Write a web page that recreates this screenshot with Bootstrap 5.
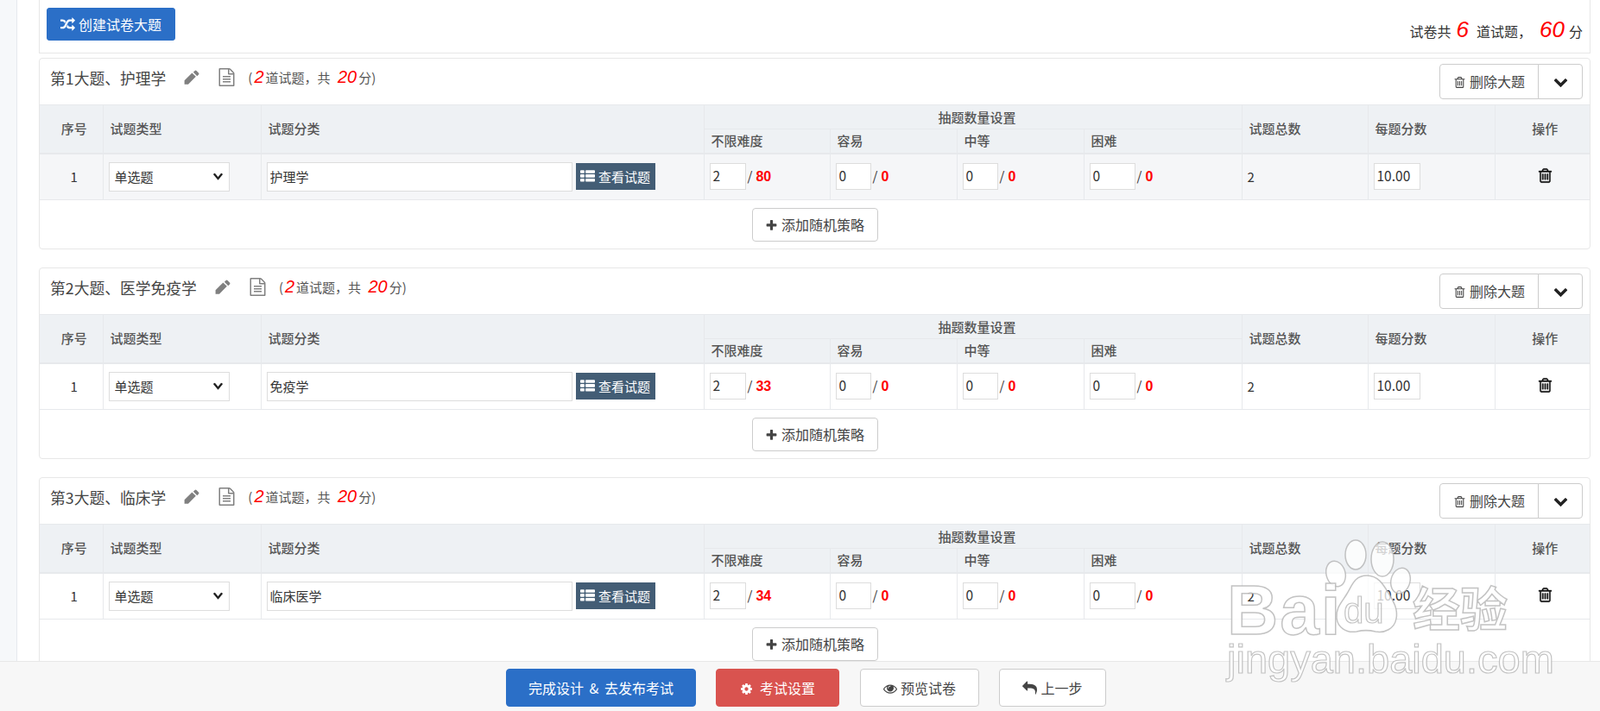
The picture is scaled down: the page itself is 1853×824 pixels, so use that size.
<!DOCTYPE html>
<html lang="zh-CN">
<head>
  <meta charset="UTF-8" />
  <title>试卷设计</title>
  <link href="https://cdn.jsdelivr.net/npm/bootstrap@5.3.0/dist/css/bootstrap.min.css" rel="stylesheet">
  <style>
    html, body { height: 100%; overflow: hidden; }
    body {
      font-family: "Noto Sans CJK SC", "Liberation Sans", sans-serif;
      font-size: 15px;
      color: #333;
      background: #fff;
    }
    svg.ico { fill: currentColor; vertical-align: -2px; }
    .page-wrap { border-left: 1px solid #e6e9ee; margin-left: 19px; height: 824px; padding: 0 11px 0 25px; position: relative; }
    .side-strip { position: fixed; left: 0; top: 0; bottom: 0; width: 19px; background: #f6f8fa; }

    .top-panel { height: 62px; border: 1px solid #e7e7e7; border-top: 0; padding: 9px 8px 0; }
    .btn-create { width: 149px; height: 38px; padding: 0; font-size: 16px; line-height: 36px; background: #2b6fc7; border-color: #2b6fc7; border-radius: 3px; }
    .paper-sum { font-size: 16px; line-height: 30px; margin: 10px 0 0; }
    .paper-sum em { color: #f00; font-size: 26px; font-family: "Liberation Sans", sans-serif; }
    .paper-sum .sum-q { margin: 0 9px 0 6px; }
    .paper-sum .sum-s { margin: 0 5px 0 9px; }

    .sec-panel { border: 1px solid #e7e7e7; border-radius: 4px; height: 222px; margin-bottom: 21px; overflow: hidden; }
    .sec-panel.first-sec { margin-top: 5px; }
    .sec-head { height: 53px; padding: 6px 8px 0 12px; }
    .sec-info { height: 31px; }
    .sec-title { font-size: 17.8px; line-height: 24px; color: #444; }
    .sec-tool { color: #808080; }
    .tool-edit { margin-left: 21px; }
    .tool-doc { margin-left: 20px; }
    .sec-note { font-size: 15px; color: #555; line-height: 24px; margin-left: 14px; word-spacing: 3px; }
    .sec-note em { color: #f00; font-size: 20px; font-family: "Liberation Sans", sans-serif; margin: 0 2px; }
    .del-group .btn { height: 41px; font-size: 16px; color: #444; background: #fff; border-color: #ccc; border-radius: 4px; padding: 0; line-height: 39px; }
    .del-group .btn-del { width: 115px; border-top-right-radius: 0; border-bottom-right-radius: 0; }
    .del-group .btn-fold { width: 52px; border-top-left-radius: 0; border-bottom-left-radius: 0; color: #222; margin-left: -1px; }

    .rule-table { table-layout: fixed; width: 100%; margin: 0; border-collapse: collapse; border-color: #e7e9ec; }
    .rule-table th, .rule-table td { border: 1px solid #e7e9ec; padding: 0 6px; box-shadow: none; }
    .rule-table thead th { padding: 0 8px; background: #eef1f4; color: #555; font-size: 15px; font-weight: 500; line-height: 20px; vertical-align: middle; }
    .rule-table thead tr:first-child th { height: 28px; }
    .rule-table thead tr:last-child th { height: 28px; }
    .rule-table thead { border-bottom: 2px solid #e7e9ec; }
    .rule-table td { height: 54px; vertical-align: middle; background: #fff; font-size: 15px; color: #333; }
    .rule-table tr.row-hover td { background: #f5f6f8; }
    .rule-table thead tr:first-child th:first-child, .rule-table td:first-child { border-left: 0; padding: 0 8px 0 15px; }
    .rule-table thead tr:first-child th:last-child, .rule-table td:last-child { border-right: 0; padding: 0 6px 0 12px; }
    .rule-table .c-center { text-align: center; }
    .rule-table thead th.group-head { padding-left: 18px; }

    .cell-select { width: 140px; height: 34px; font-size: 15px; line-height: 20px; color: #333; padding: 0 6px; border: 1px solid #ddd; border-radius: 0; background-image: url("data:image/svg+xml,%3csvg xmlns='http://www.w3.org/2000/svg' viewBox='0 0 16 16'%3e%3cpath fill='none' stroke='%23222' stroke-linecap='round' stroke-width='3' d='M3 5l5 6 5-6'/%3e%3c/svg%3e"); background-position: right 6px center; background-size: 13px 13px; }
    .cell-input { height: 34px; font-size: 15px; line-height: 20px; color: #333; border: 1px solid #ddd; border-radius: 0; padding: 0 3px; width: 354px; }
    .cell-num { height: 31px; font-size: 15.5px; line-height: 20px; color: #333; border: 1px solid #ddd; border-radius: 0; padding: 0 3px 3px; background: #fff; }
    .w-a { width: 42px; } .w-b { width: 41px; } .w-c { width: 53px; } .w-d { width: 54px; }
    .btn-view { width: 92px; height: 31px; margin-left: 4px; padding: 0; font-size: 15px; line-height: 29px; color: #fff; background: #435d75; border: 0; border-radius: 0; }
    .slash { font-size: 15px; color: #333; margin-left: 2px; }
    .max-num { color: #f00; font-weight: 700; font-size: 16px; margin-left: 4px; font-family: "Liberation Sans", sans-serif; }
    .add-row { height: 56px; padding-top: 9px; }
    .btn-add { width: 146px; height: 39px; padding: 0; font-size: 16px; line-height: 37px; color: #444; background: #fff; border-color: #ccc; border-radius: 4px; }
    .ico-bin { color: #111; stroke: #111; stroke-width: 36px; }

    .foot-bar { position: fixed; left: 0; right: 0; bottom: 0; height: 58px; background: #f7f7f7; border-top: 1px solid #e8e8e8; padding: 8px 0 0 14px; z-index: 5; }
    .foot-bar .btn { height: 44px; font-size: 16px; padding: 0; line-height: 42px; border-radius: 4px; }
    .btn-finish { width: 220px; background: #2b6fc7; border-color: #2b6fc7; word-spacing: 3px; }
    .btn-conf { width: 143px; background: #d9534f; border-color: #d9534f; }
    .foot-bar .btn-prev { width: 138px; margin-left: 1px; }
    .btn-back { width: 124px; }
    .btn-prev, .btn-back { background: #fff; border-color: #ccc; color: #444; }
    .foot-gap { gap: 23px; }

    /* 百度经验 watermark */
    .wm-box { position: fixed; left: 1421px; top: 625px; width: 335px; height: 160px; z-index: 9; pointer-events: none; color: #fff; filter: blur(.4px); }
    .wm-paw { position: absolute; left: 114px; top: 0; }
    .wm-word { position: absolute; font-family: "Liberation Sans", sans-serif; -webkit-text-stroke: 1.5px rgba(175,175,175,.75); color: rgba(255,255,255,.85); line-height: 1; }
    .wm-bai { left: 0; top: 41px; font-size: 82px; font-weight: 700; letter-spacing: 2px; }
    .wm-du { left: 135px; top: 62px; font-size: 42px; color: transparent; -webkit-text-stroke-width: 1.2px; }
    .wm-jy { left: 215px; top: 50px; font-size: 55px; font-family: "Noto Sans CJK SC", sans-serif; font-weight: 700; }
    .wm-url { left: 0; top: 115px; font-size: 47px; -webkit-text-stroke-width: 1.2px; font-weight: 400; }
  </style>
</head>
<body>
  <svg width="0" height="0" class="position-absolute">
    <symbol id="i-random" viewBox="0 0 1792 1792"><path d="M666 481q-60 92-137 273-22-45-37-72.5t-40.5-63.5-51-56.5-63-35-81.5-14.5h-224q-14 0-23-9t-9-23v-192q0-14 9-23t23-9h224q250 0 410 225zm1126 799q0 14-9 23l-320 320q-9 9-23 9-13 0-22.5-9.5t-9.5-22.5v-192q-32 0-85 .5t-81 1-73-1-71-5-64-10.5-63-18.5-58-28.5-59-40-55-53.5-56-69.5q59-93 136-273 22 45 37 72.5t40.5 63.5 51 56.5 63 35 81.5 14.5h256v-192q0-14 9-23t23-9q12 0 24 10l319 319q9 9 9 23zm0-896q0 14-9 23l-320 320q-9 9-23 9-13 0-22.5-9.5t-9.5-22.5v-192h-256q-48 0-87 15t-69 45-51 61.5-45 77.5q-32 62-78 171-29 66-49.5 111t-54 105-64 100-74 83-90 68.5-106.5 42-128 16.5h-224q-14 0-23-9t-9-23v-192q0-14 9-23t23-9h224q48 0 87-15t69-45 51-61.5 45-77.5q32-62 78-171 29-66 49.5-111t54-105 64-100 74-83 90-68.5 106.5-42 128-16.5h256v-192q0-14 9-23t23-9q12 0 24 10l319 319q9 9 9 23z"/></symbol>
    <symbol id="i-pencil" viewBox="0 0 1792 1792"><path d="M888 416l416 416-832 832H56v-416zM1643 512q0 53-37 90l-166 166-416-416 166-165q36-38 90-38 53 0 91 38l235 234q37 39 37 91z"/></symbol>
    <symbol id="i-doc" viewBox="0 0 1792 1792"><path d="M1596 380q28 28 48 76t20 88v1152q0 40-28 68t-68 28h-1344q-40 0-68-28t-28-68v-1600q0-40 28-68t68-28h896q40 0 88 20t76 48zm-444-244v376h376q-10-29-22-41l-313-313q-12-12-41-22zm384 1528v-1024h-416q-40 0-68-28t-28-68v-416h-768v1536h1280zm-1024-864q0-14 9-23t23-9h704q14 0 23 9t9 23v64q0 14-9 23t-23 9h-704q-14 0-23-9t-9-23v-64zm736 224q14 0 23 9t9 23v64q0 14-9 23t-23 9h-704q-14 0-23-9t-9-23v-64q0-14 9-23t23-9h704zm0 256q14 0 23 9t9 23v64q0 14-9 23t-23 9h-704q-14 0-23-9t-9-23v-64q0-14 9-23t23-9h704z"/></symbol>
    <symbol id="i-trash" viewBox="0 0 1792 1792"><path d="M704 736v576q0 14-9 23t-23 9h-64q-14 0-23-9t-9-23v-576q0-14 9-23t23-9h64q14 0 23 9t9 23zm256 0v576q0 14-9 23t-23 9h-64q-14 0-23-9t-9-23v-576q0-14 9-23t23-9h64q14 0 23 9t9 23zm256 0v576q0 14-9 23t-23 9h-64q-14 0-23-9t-9-23v-576q0-14 9-23t23-9h64q14 0 23 9t9 23zm128 724v-948h-896v948q0 22 7 40.5t14.5 27 10.5 8.5h832q3 0 10.5-8.5t14.5-27 7-40.5zm-672-1076h448l-48-117q-7-9-17-11h-317q-10 2-17 11zm928 32v64q0 14-9 23t-23 9h-96v948q0 83-47 143.5t-113 60.5h-832q-66 0-113-58.5t-47-141.5v-952h-96q-14 0-23-9t-9-23v-64q0-14 9-23t23-9h309l70-167q15-37 54-63t79-26h320q40 0 79 26t54 63l70 167h309q14 0 23 9t9 23z"/></symbol>
    <symbol id="i-down" viewBox="0 0 1792 1792"><path d="M1683 808l-742 741q-19 19-45 19t-45-19l-742-741q-19-19-19-45.5t19-45.5l166-165q19-19 45-19t45 19l531 531 531-531q19-19 45-19t45 19l166 165q19 19 19 45.5t-19 45.5z"/></symbol>
    <symbol id="i-plus" viewBox="0 0 1792 1792"><path d="M1600 736v192q0 40-28 68t-68 28h-416v416q0 40-28 68t-68 28h-192q-40 0-68-28t-28-68v-416h-416q-40 0-68-28t-28-68v-192q0-40 28-68t68-28h416v-416q0-40 28-68t68-28h192q40 0 68 28t28 68v416h416q40 0 68 28t28 68z"/></symbol>
    <symbol id="i-cog" viewBox="0 0 1792 1792"><path d="M1152 896q0-106-75-181t-181-75-181 75-75 181 75 181 181 75 181-75 75-181zm512-109v222q0 12-8 23t-20 13l-185 28q-19 54-39 91 35 50 107 138 10 12 10 25t-9 23q-27 37-99 108t-94 71q-12 0-26-9l-138-108q-44 23-91 38-16 136-29 186-7 28-36 28h-222q-14 0-24.5-8.5t-11.5-21.5l-28-184q-49-16-90-37l-141 107q-10 9-25 9-14 0-25-11-126-114-165-168-7-10-7-23 0-12 8-23 15-21 51-66.5t54-70.5q-27-50-41-99l-183-27q-13-2-21-12.5t-8-23.5v-222q0-12 8-23t19-13l186-28q14-46 39-92-40-57-107-138-10-12-10-24 0-10 9-23 26-36 98.5-107.5t94.5-71.5q13 0 26 10l138 107q44-23 91-38 16-136 29-186 7-28 36-28h222q14 0 24.5 8.5t11.5 21.5l28 184q49 16 90 37l142-107q9-9 24-9 13 0 25 10 129 119 165 170 7 8 7 22 0 12-8 23-15 21-51 66.5t-54 70.5q26 50 41 98l183 28q13 2 21 12.5t8 23.5z"/></symbol>
    <symbol id="i-eye" viewBox="0 0 1792 1792"><path d="M1664 960q-152-236-381-353 61 104 61 225 0 185-131.5 316.5t-316.5 131.5-316.5-131.5-131.5-316.5q0-121 61-225-229 117-381 353 133 205 333.5 326.5t434.5 121.5 434.5-121.5 333.5-326.5zm-720-384q0-20-14-34t-34-14q-125 0-214.5 89.5t-89.5 214.5q0 20 14 34t34 14 34-14 14-34q0-86 61-147t147-61q20 0 34-14t14-34zm848 384q0 34-20 69-140 230-376.5 368.5t-499.5 138.5-499.5-139-376.5-368q-20-35-20-69t20-69q140-229 376.5-368t499.5-139 499.5 139 376.5 368q20 35 20 69z"/></symbol>
    <symbol id="i-reply" viewBox="0 0 1792 1792"><path d="M1792 1120q0 166-127 451-3 7-10.5 24t-13.5 30-13 22q-12 17-28 17-15 0-23.5-10t-8.5-25q0-9 2.5-26.5t2.5-23.5q5-68 5-123 0-101-17.5-181t-48.5-138.5-80-101-105.5-69.5-133-42.5-154-21.5-175.5-6h-224v256q0 26-19 45t-45 19-45-19l-512-512q-19-19-19-45t19-45l512-512q19-19 45-19t45 19 19 45v256h224q713 0 875 403 53 134 53 333z"/></symbol>
    <symbol id="i-list" viewBox="0 0 1792 1792"><path d="M512 1248v192q0 40-28 68t-68 28h-320q-40 0-68-28t-28-68v-192q0-40 28-68t68-28h320q40 0 68 28t28 68zm0-512v192q0 40-28 68t-68 28h-320q-40 0-68-28t-28-68v-192q0-40 28-68t68-28h320q40 0 68 28t28 68zm1280 512v192q0 40-28 68t-68 28h-960q-40 0-68-28t-28-68v-192q0-40 28-68t68-28h960q40 0 68 28t28 68zm-1280-1024v192q0 40-28 68t-68 28h-320q-40 0-68-28t-28-68v-192q0-40 28-68t68-28h320q40 0 68 28t28 68zm1280 512v192q0 40-28 68t-68 28h-960q-40 0-68-28t-28-68v-192q0-40 28-68t68-28h960q40 0 68 28t28 68zm0-512v192q0 40-28 68t-68 28h-960q-40 0-68-28t-28-68v-192q0-40 28-68t68-28h960q40 0 68 28t28 68z"/></symbol>
  </svg>

  <div class="side-strip"></div>
  <div class="page-wrap" id="pageWrap">
    <div class="top-panel d-flex justify-content-between">
      <button class="btn btn-primary btn-create"><svg class="ico me-1" width="17" height="17"><use href="#i-random"/></svg>创建试卷大题</button>
      <div class="paper-sum">试卷共<em class="sum-q">6</em>道试题，<em class="sum-s">60</em>分</div>
    </div>
    <div id="secList"></div>
  </div>

  <div class="foot-bar d-flex justify-content-center foot-gap">
    <button class="btn btn-primary btn-finish">完成设计 &amp; 去发布考试</button>
    <button class="btn btn-danger btn-conf"><svg class="ico me-2" width="15" height="15"><use href="#i-cog"/></svg>考试设置</button>
    <button class="btn btn-light btn-prev"><svg class="ico me-1" width="16" height="16"><use href="#i-eye"/></svg>预览试卷</button>
    <button class="btn btn-light btn-back"><svg class="ico me-1" width="17" height="17"><use href="#i-reply"/></svg>上一步</button>
  </div>

  <div class="wm-box">
    <svg class="wm-paw" width="110" height="125" viewBox="0 0 110 125" fill="rgba(255,255,255,.75)" stroke="rgba(175,175,175,.75)" stroke-width="1.5">
      <ellipse cx="12" cy="40" rx="11" ry="15" transform="rotate(-15 12 40)"/>
      <ellipse cx="35" cy="18" rx="12" ry="17"/>
      <ellipse cx="66" cy="23" rx="13" ry="20"/>
      <ellipse cx="87" cy="48" rx="11" ry="15" transform="rotate(15 87 48)"/>
      <path d="M48 42c14 0 20 12 26 22 6 10 10 18 8 28-2 12-14 17-24 15-8-2-14-2-22 0-12 2-22-5-23-16-1-12 6-18 12-28 6-10 9-21 23-21z"/>
    </svg>
    <span class="wm-word wm-bai">Bai</span>
    <span class="wm-word wm-du">du</span>
    <span class="wm-word wm-jy">经验</span>
    <span class="wm-word wm-url">jingyan.baidu.com</span>
  </div>

  <script>
    var sections = [
      { no: 1, name: '护理学', cat: '护理学', total: 80, hover: true },
      { no: 2, name: '医学免疫学', cat: '免疫学', total: 33 },
      { no: 3, name: '临床学', cat: '临床医学', total: 34 }
    ];

    function numCell(val, wClass, max) {
      return '<td><input class="cell-num ' + wClass + '" value="' + val + '"><span class="slash">/</span><span class="max-num">' + max + '</span></td>';
    }

    var html = '';
    sections.forEach(function (s, i) {
      html += '<div class="sec-panel' + (i === 0 ? ' first-sec' : '') + '">' +
        '<div class="sec-head d-flex align-items-start justify-content-between">' +
          '<div class="sec-info d-flex align-items-center">' +
            '<span class="sec-title">第' + s.no + '大题、' + s.name + '</span>' +
            '<svg class="ico sec-tool tool-edit" width="19" height="19"><use href="#i-pencil"/></svg>' +
            '<svg class="ico sec-tool tool-doc" width="21" height="21"><use href="#i-doc"/></svg>' +
            '<span class="sec-note">(<em>2</em>道试题，共 <em>20</em>分)</span>' +
          '</div>' +
          '<div class="del-group d-flex">' +
            '<button class="btn btn-del"><svg class="ico me-1" width="15" height="15"><use href="#i-trash"/></svg>删除大题</button>' +
            '<button class="btn btn-fold"><svg class="ico" width="17" height="17"><use href="#i-down"/></svg></button>' +
          '</div>' +
        '</div>' +
        '<table class="table rule-table">' +
          '<colgroup><col style="width:73px"><col style="width:183px"><col style="width:513px"><col style="width:146px"><col style="width:147px"><col style="width:147px"><col style="width:183px"><col style="width:146px"><col style="width:147px"><col></colgroup>' +
          '<thead><tr>' +
            '<th rowspan="2" class="c-center">序号</th><th rowspan="2">试题类型</th><th rowspan="2">试题分类</th>' +
            '<th colspan="4" class="c-center group-head">抽题数量设置</th>' +
            '<th rowspan="2">试题总数</th><th rowspan="2">每题分数</th><th rowspan="2" class="c-center">操作</th>' +
          '</tr><tr><th>不限难度</th><th>容易</th><th>中等</th><th>困难</th></tr></thead>' +
          '<tbody><tr class="' + (s.hover ? 'row-hover' : '') + '">' +
            '<td class="c-center">1</td>' +
            '<td><select class="form-select cell-select"><option>单选题</option></select></td>' +
            '<td><div class="d-flex align-items-center"><input class="form-control cell-input" value="' + s.cat + '"><button class="btn btn-view"><svg class="ico me-1" width="17" height="17"><use href="#i-list"/></svg>查看试题</button></div></td>' +
            numCell(2, 'w-a', s.total) + numCell(0, 'w-b', 0) + numCell(0, 'w-b', 0) + numCell(0, 'w-c', 0) +
            '<td>2</td>' +
            '<td><input class="cell-num w-d" value="10.00"></td>' +
            '<td class="c-center"><svg class="ico ico-bin" width="19" height="19"><use href="#i-trash"/></svg></td>' +
          '</tr></tbody>' +
        '</table>' +
        '<div class="add-row text-center"><button class="btn btn-add"><svg class="ico me-1" width="15" height="15"><use href="#i-plus"/></svg>添加随机策略</button></div>' +
      '</div>';
    });
    document.getElementById('secList').innerHTML = html;
  </script>
  <script src="https://cdn.jsdelivr.net/npm/bootstrap@5.3.0/dist/js/bootstrap.bundle.min.js"></script>
</body>
</html>
